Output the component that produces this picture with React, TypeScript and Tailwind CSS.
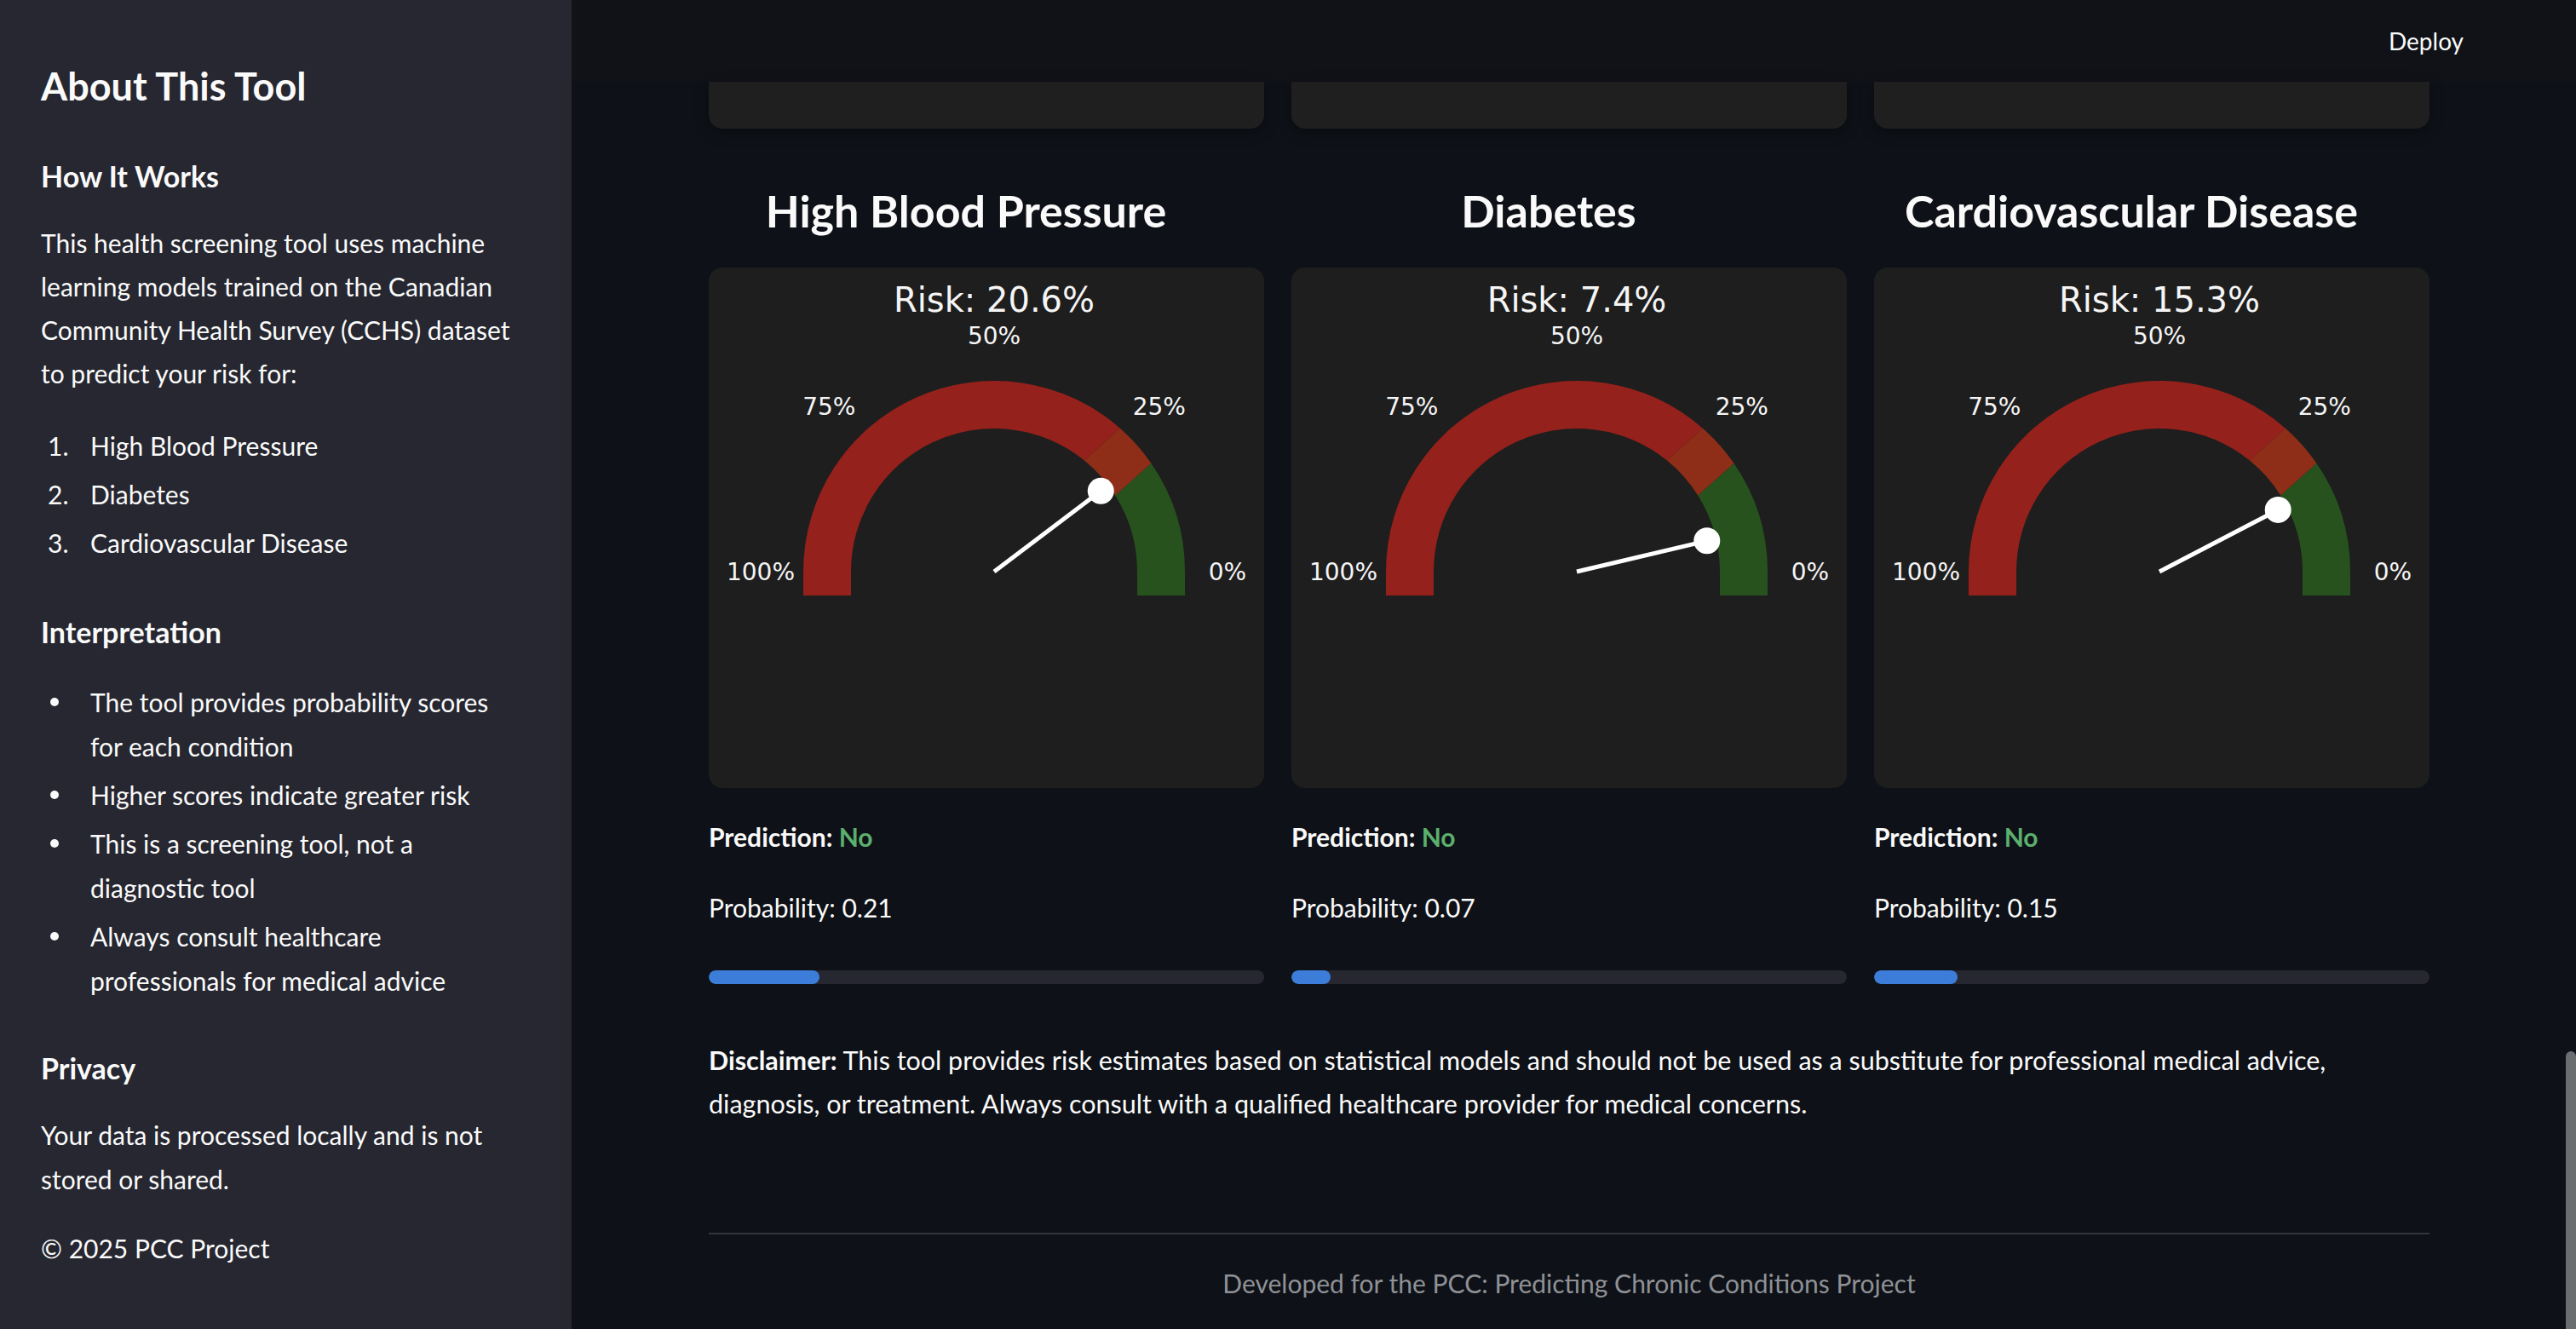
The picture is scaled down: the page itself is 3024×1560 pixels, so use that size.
import React from "react";

const SANS = { fontFamily: "Lato, 'Noto Sans', sans-serif" } as const;

type GaugeProps = { p: number; title: string };

function Gauge({ p, title }: GaugeProps) {
  const cx = 335;
  const cy = 357;
  const R = 224;
  const r = 168;
  const ext = 28;
  const pt = (rad: number, deg: number) => {
    const a = (deg * Math.PI) / 180;
    return `${(cx + rad * Math.cos(a)).toFixed(2)} ${(cy - rad * Math.sin(a)).toFixed(2)}`;
  };
  const green = `M ${cx + R} ${cy + ext} L ${cx + R} ${cy} A ${R} ${R} 0 0 0 ${pt(R, 34.6)} L ${pt(r, 32.2)} A ${r} ${r} 0 0 1 ${cx + r} ${cy} L ${cx + r} ${cy + ext} Z`;
  const red = `M ${cx - R} ${cy + ext} L ${cx - R} ${cy} A ${R} ${R} 0 0 1 ${pt(R, 48.7)} L ${pt(r, 50.9)} A ${r} ${r} 0 0 0 ${cx - r} ${cy} L ${cx - r} ${cy + ext} Z`;
  const overlap = `M ${pt(R, 48.7)} A ${R} ${R} 0 0 1 ${pt(R, 34.6)} L ${pt(r, 32.2)} A ${r} ${r} 0 0 0 ${pt(r, 50.9)} Z`;
  const ang = (p * 180 * Math.PI) / 180;
  const nl = 157;
  const tx = cx + nl * Math.cos(ang);
  const ty = cy - nl * Math.sin(ang);
  const lr = 274;
  const d45 = lr * Math.SQRT1_2;
  const lab = { fontFamily: "'DejaVu Sans', sans-serif", fontSize: 28, fill: "#f5f5f5" };
  return (
    <svg viewBox="0 0 652 611" width="652" height="611" className="block">
      <text x={cx} y={38} textAnchor="middle" dominantBaseline="central" style={{ fontFamily: "'DejaVu Sans', sans-serif", fontSize: 40, fill: "#f5f5f5" }}>
        {title}
      </text>
      <path d={green} fill="#27521d" />
      <path d={red} fill="#94211b" />
      <path d={overlap} fill="#8e2e18" />
      <text x={cx + lr} y={cy} textAnchor="middle" dominantBaseline="central" style={lab}>0%</text>
      <text x={cx + d45} y={cy - d45} textAnchor="middle" dominantBaseline="central" style={lab}>25%</text>
      <text x={cx} y={cy - lr - 3} textAnchor="middle" dominantBaseline="central" style={lab}>50%</text>
      <text x={cx - d45} y={cy - d45} textAnchor="middle" dominantBaseline="central" style={lab}>75%</text>
      <text x={cx - lr} y={cy} textAnchor="middle" dominantBaseline="central" style={lab}>100%</text>
      <line x1={cx} y1={cy} x2={tx} y2={ty} stroke="#ffffff" strokeWidth={5} strokeLinecap="butt" />
      <circle cx={tx} cy={ty} r={15.5} fill="#ffffff" />
    </svg>
  );
}

type ColProps = { name: string; risk: number; prob: string; bar: number };

function Column({ name, risk, prob, bar }: ColProps) {
  return (
    <div className="flex flex-col">
      <h3 className="mt-[62px] pr-[48px] text-center text-[52px] leading-[68px] font-bold text-[#fafafa]" style={SANS}>
        {name}
      </h3>
      <div className="mt-[33px] h-[611px] w-[652px] rounded-[16px] bg-[#1e1e1e] overflow-hidden">
        <Gauge p={risk / 100} title={`Risk: ${risk.toFixed(1)}%`} />
      </div>
      <p className="mt-[32px] text-[30px] leading-[51px] font-bold text-[#fafafa]" style={SANS}>
        Prediction: <span className="text-[#5bb06e]">No</span>
      </p>
      <p className="mt-[32px] text-[30px] leading-[51px] text-[#fafafa]" style={SANS}>
        Probability: {prob}
      </p>
      <div className="mt-[48px] h-[16px] w-full rounded-full bg-[#262730] overflow-hidden">
        <div className="h-full rounded-full bg-[#3b7dd8]" style={{ width: `${bar}%` }} />
      </div>
    </div>
  );
}

function Sidebar() {
  const li = "flex text-[30px] leading-[52px] text-[#fafafa]";
  return (
    <aside className="w-[671px] h-[1560px] shrink-0 bg-[#262730] pl-[48px] pr-[40px] pt-[74px] text-[#fafafa]" style={SANS}>
      <h2 className="text-[45px] leading-[54px] font-bold">About This Tool</h2>
      <h3 className="mt-[57px] text-[34px] leading-[44px] font-bold">How It Works</h3>
      <p className="mt-[31px] text-[30px] leading-[51px]">
        This health screening tool uses machine<br />
        learning models trained on the Canadian<br />
        Community Health Survey (CCHS) dataset<br />
        to predict your risk for:
      </p>
      <ol className="mt-[33px] flex flex-col gap-[5px]">
        {["High Blood Pressure", "Diabetes", "Cardiovascular Disease"].map((t, i) => (
          <li key={t} className={li}>
            <span className="w-[58px] shrink-0 pl-[8px]">{i + 1}.</span>
            <span>{t}</span>
          </li>
        ))}
      </ol>
      <h3 className="mt-[57px] text-[34px] leading-[44px] font-bold">Interpretation</h3>
      <ul className="mt-[34px] flex flex-col gap-[5px]">
        {[
          ["The tool provides probability scores", "for each condition"],
          ["Higher scores indicate greater risk"],
          ["This is a screening tool, not a", "diagnostic tool"],
          ["Always consult healthcare", "professionals for medical advice"],
        ].map((lines) => (
          <li key={lines[0]} className={li}>
            <span className="w-[58px] shrink-0 flex h-[52px] items-center pl-[11px]">
              <span className="block h-[10px] w-[10px] rounded-full bg-[#fafafa]" />
            </span>
            <span className="whitespace-nowrap">
              {lines.map((l, j) => (
                <React.Fragment key={l}>
                  {j > 0 && <br />}
                  {l}
                </React.Fragment>
              ))}
            </span>
          </li>
        ))}
      </ul>
      <h3 className="mt-[55px] text-[34px] leading-[44px] font-bold">Privacy</h3>
      <p className="mt-[30px] text-[30px] leading-[52px]">
        Your data is processed locally and is not<br />
        stored or shared.
      </p>
      <p className="mt-[29px] text-[30px] leading-[52px]">© 2025 PCC Project</p>
    </aside>
  );
}

export default function App() {
  return (
    <div className="flex w-[3024px] h-[1560px] overflow-hidden bg-[#0e1117]" style={SANS}>
      <Sidebar />
      <main className="relative flex-1 h-[1560px] bg-[#0e1117]">
        <header className="h-[96px] bg-[#101217] flex items-center justify-end pr-[132px]">
          <span className="text-[28px] leading-[40px] text-[#fafafa]" style={SANS}>Deploy</span>
        </header>
        <div className="ml-[161px] w-[2020px]">
          <div className="grid grid-cols-3 gap-x-[32px]">
            <div className="h-[55px] rounded-b-[16px] bg-[#1f1f1f] shadow-[0_4px_16px_rgba(0,0,0,0.35)]" />
            <div className="h-[55px] rounded-b-[16px] bg-[#1f1f1f] shadow-[0_4px_16px_rgba(0,0,0,0.35)]" />
            <div className="h-[55px] rounded-b-[16px] bg-[#1f1f1f] shadow-[0_4px_16px_rgba(0,0,0,0.35)]" />
          </div>
          <div className="grid grid-cols-3 gap-x-[32px]">
            <Column name="High Blood Pressure" risk={20.6} prob="0.21" bar={20} />
            <Column name="Diabetes" risk={7.4} prob="0.07" bar={7} />
            <Column name="Cardiovascular Disease" risk={15.3} prob="0.15" bar={15} />
          </div>
          <p className="mt-[64px] text-[30.5px] leading-[51px] text-[#fafafa]">
            <span className="font-bold">Disclaimer:</span> This tool provides risk estimates based on statistical models and should not be used as a substitute for professional medical advice,<br />
            diagnosis, or treatment. Always consult with a qualified healthcare provider for medical concerns.
          </p>
          <div className="mt-[126px] h-[2px] w-full bg-[#33353b]" />
          <p className="mt-[32px] text-center text-[30px] leading-[51px] text-[#8e9196]">
            Developed for the PCC: Predicting Chronic Conditions Project
          </p>
        </div>
        <div className="absolute right-0 top-[1234px] h-[326px] w-[12px] rounded-t-full bg-[#6c6d71]" />
      </main>
    </div>
  );
}
